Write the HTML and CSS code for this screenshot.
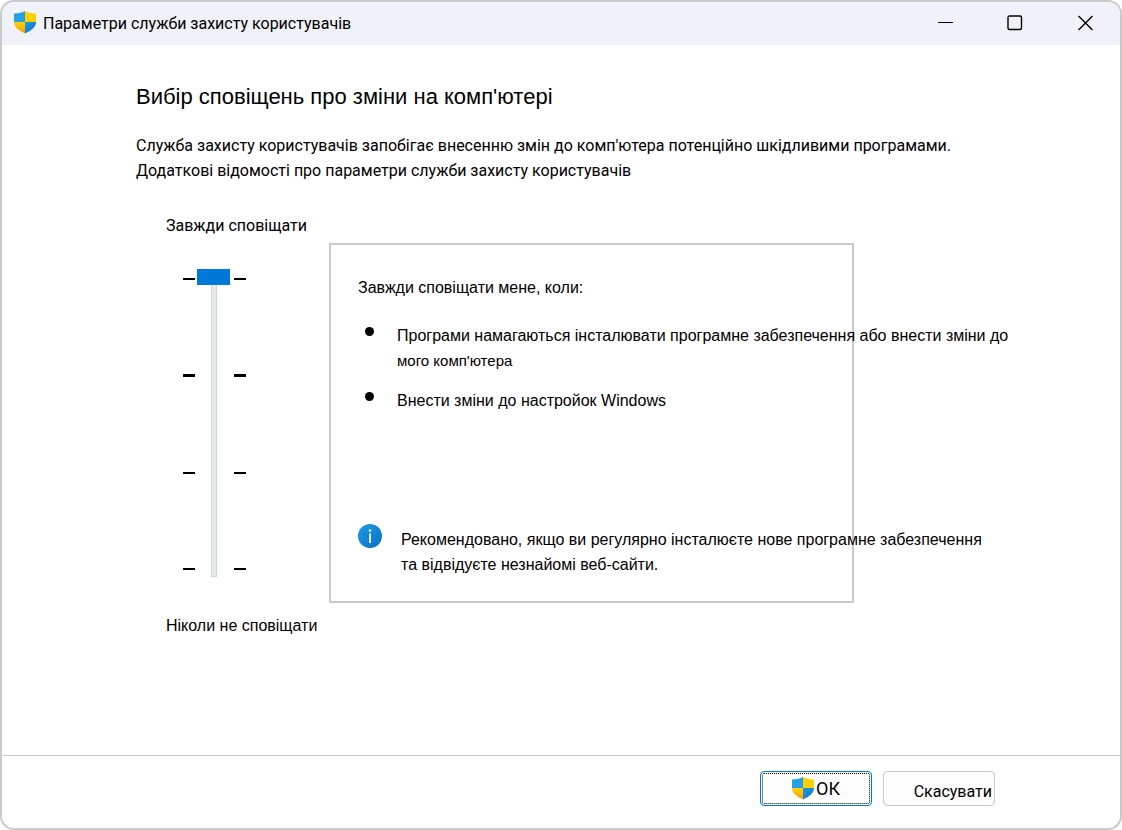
FILE: index.html
```html
<!DOCTYPE html>
<html lang="uk">
<head>
    <meta charset="UTF-8">
    <meta name="viewport" content="width=device-width, initial-scale=1.0">
    <title>Параметри служби захисту користувачів</title>
    <link rel="stylesheet" href="styles.css">
</head>
<body>
    <!-- Shared shield icon -->
    <svg class="defs" width="0" height="0" aria-hidden="true">
        <defs>
            <linearGradient id="blue" x1="0" y1="0" x2="1" y2="1">
                <stop offset="0" stop-color="#1f9be0"/>
                <stop offset="1" stop-color="#0a6fc9"/>
            </linearGradient>
            <linearGradient id="yellow" x1="0" y1="0" x2="0" y2="1">
                <stop offset="0" stop-color="#ffd000"/>
                <stop offset="1" stop-color="#f0a010"/>
            </linearGradient>
            <clipPath id="shieldShape">
                <path d="M11 0C13.500 1.600 17 2.500 22 2.500V11C22 16 17.500 19.500 11 22.500C4.500 19.500 0 16 0 11V2.500C5 2.500 8.500 1.600 11 0Z"/>
            </clipPath>
            <symbol id="shield" viewBox="0 0 22 23">
                <g clip-path="url(#shieldShape)">
                    <rect width="11" height="11" fill="#25a0e2"/>
                    <rect x="11" width="11" height="11" fill="#ffd000"/>
                    <rect y="11" width="11" height="12" fill="url(#yellow)"/>
                    <rect x="11" y="11" width="11" height="12" fill="url(#blue)"/>
                </g>
            </symbol>
        </defs>
    </svg>

    <div class="window">
        <header class="titlebar">
            <svg class="shield"><use href="#shield"/></svg>
            <span class="title">Параметри служби захисту користувачів</span>
            <div class="window-buttons">
                <button type="button" aria-label="Згорнути">
                    <svg width="16" height="16" viewBox="0 0 16 16"><path d="M1 7.500H16" stroke-width="1"/></svg>
                </button>
                <button type="button" aria-label="Розгорнути">
                    <svg width="16" height="16" viewBox="0 0 16 16"><rect x="1" y="1" width="13.500" height="13.500" rx="1.500"/></svg>
                </button>
                <button type="button" aria-label="Закрити">
                    <svg width="16" height="16" viewBox="0 0 16 16"><path d="M1.500 1L15.500 15M15.500 1L1.500 15"/></svg>
                </button>
            </div>
        </header>

        <main class="content">
            <h1>Вибір сповіщень про зміни на комп'ютері</h1>
            <p class="intro">Служба захисту користувачів запобігає внесенню змін до комп'ютера потенційно шкідливими програмами.</p>
            <a class="more" href="#">Додаткові відомості про параметри служби захисту користувачів</a>

            <div class="settings">
                <div class="level">
                    <label for="level">Завжди сповіщати</label>
                    <div class="slider">
                        <div class="ticks"><i></i><i></i><i></i><i></i></div>
                        <input type="range" id="level" min="0" max="3" value="3">
                        <div class="ticks"><i></i><i></i><i></i><i></i></div>
                    </div>
                    <span class="never">Ніколи не сповіщати</span>
                </div>

                <section class="panel">
                    <p>Завжди сповіщати мене, коли:</p>
                    <ul>
                        <li>Програми намагаються інсталювати програмне забезпечення або внести зміни до<br><small>мого комп'ютера</small></li>
                        <li>Внести зміни до настройок Windows</li>
                    </ul>
                    <div class="note">
                        <svg width="24" height="24" viewBox="0 0 24 24">
                            <circle cx="12" cy="12" r="12" fill="url(#blue)"/>
                            <circle cx="12" cy="6.500" r="1.300" fill="#fff"/>
                            <rect x="11.200" y="9.500" width="1.700" height="9.500" fill="#fff"/>
                        </svg>
                        <p>Рекомендовано, якщо ви регулярно інсталюєте нове програмне забезпечення<br>та відвідуєте незнайомі веб-сайти.</p>
                    </div>
                </section>
            </div>
        </main>

        <footer class="footer">
            <button type="button" class="btn btn-ok"><svg class="shield"><use href="#shield"/></svg>ОК</button>
            <button type="button" class="btn btn-cancel">Скасувати</button>
        </footer>
    </div>
</body>
</html>
```
FILE: styles.css
```css
* {
    box-sizing: border-box;
}

body {
    margin: 0;
    background-color: #fff;
    color: #000;
    font-family: Roboto, "Liberation Sans", sans-serif;
    font-size: 16px;
    line-height: 25px;
}

h1, p, ul {
    margin: 0;
    padding: 0;
}

.defs {
    position: absolute;
}

.window {
    display: flex;
    flex-direction: column;
    min-height: 100vh;
    border: 2px solid #cacaca;
    border-radius: 14px;
    overflow: hidden;
}

/* Title bar */
.titlebar {
    display: flex;
    align-items: center;
    height: 43px;
    padding-left: 12px;
    background-color: #f0f2f9;
}

.shield {
    width: 22px;
    height: 23px;
    flex: none;
}

.titlebar .shield {
    margin-bottom: 2px;
}

.title {
    margin-left: 7px;
}

.window-buttons {
    display: flex;
    margin-left: auto;
}

.window-buttons button {
    display: flex;
    justify-content: center;
    align-items: center;
    width: 70px;
    height: 43px;
    padding: 0 0 2px;
    border: none;
    background: none;
}

.window-buttons svg {
    fill: none;
    stroke: #000;
    stroke-width: 1.4;
}

/* Content */
.content {
    flex: 1;
    padding: 38px 266px 0 134px;
}

h1 {
    font-family: "Liberation Sans", sans-serif;
    font-size: 22px;
    font-weight: normal;
    line-height: 28px;
    white-space: nowrap;
}

.intro {
    margin-top: 22px;
    white-space: nowrap;
}

.more {
    display: block;
    color: #000;
    text-decoration: none;
}

.settings {
    display: flex;
    margin-top: 30px;
}

/* Slider */
.level {
    display: flex;
    flex-direction: column;
    width: 193px;
    padding-left: 30px;
    white-space: nowrap;
}

.slider {
    display: flex;
    gap: 2px;
    margin: 31px 0 36px 17px;
}

.ticks {
    display: flex;
    flex-direction: column;
    justify-content: space-between;
    padding: 9px 0 7px;
}

.ticks:last-child {
    margin-left: 2px;
}

.ticks i {
    width: 12px;
    height: 2px;
    background-color: #000;
}

.ticks i:nth-child(2) {
    height: 3px;
}

input[type="range"] {
    appearance: none;
    writing-mode: vertical-lr;
    direction: rtl;
    width: 33px;
    height: 308px;
    margin: 0;
    background: none;
}

input[type="range"]::-webkit-slider-runnable-track {
    width: 6px;
    height: 308px;
    background-color: #e7eae9;
    box-shadow: inset 0 0 0 1px #d3d5d4;
}

input[type="range"]::-webkit-slider-thumb {
    appearance: none;
    width: 33px;
    height: 16px;
    margin: 0 0 0 -14px;
    background-color: #0078d7;
}

.never {
    font-family: "Liberation Sans", sans-serif;
}

/* Description panel, its lines do not wrap */
.panel {
    flex: 1;
    min-width: 0;
    height: 360px;
    margin-top: 30px;
    padding: 30px 27px;
    border: 2px solid #cacaca;
    font-family: "Liberation Sans", sans-serif;
    white-space: nowrap;
}

.panel ul {
    margin-top: 23px;
    list-style: none;
}

.panel li {
    position: relative;
    margin-bottom: 15px;
    padding-left: 39px;
}

.panel li::before {
    content: "";
    position: absolute;
    left: 7px;
    top: 4px;
    width: 9px;
    height: 9px;
    border-radius: 50%;
    background-color: #000;
}

.panel small {
    font-size: 15px;
}

.note {
    display: flex;
    gap: 19px;
    margin-top: 111px;
}

.note svg {
    flex: none;
}

.note p {
    margin-top: 3px;
}

/* Footer */
.footer {
    display: flex;
    gap: 11px;
    justify-content: flex-end;
    height: 73px;
    padding: 15px 125px 0 0;
    border-top: 1px solid #cacaca;
}

.btn {
    display: flex;
    align-items: center;
    width: 112px;
    height: 35px;
    padding: 0;
    border: 1px solid #cacaca;
    border-radius: 4px;
    background-color: #fdfdfd;
    color: #000;
    font-family: Roboto, sans-serif;
    font-size: 16px;
}

.btn-ok {
    gap: 2px;
    justify-content: center;
    border-color: #0078d7;
    outline: 1px dotted #000;
    outline-offset: -3px;
    font-size: 18px;
}

.btn-cancel {
    justify-content: flex-end;
    padding: 5px 2px 0 0;
}
```
